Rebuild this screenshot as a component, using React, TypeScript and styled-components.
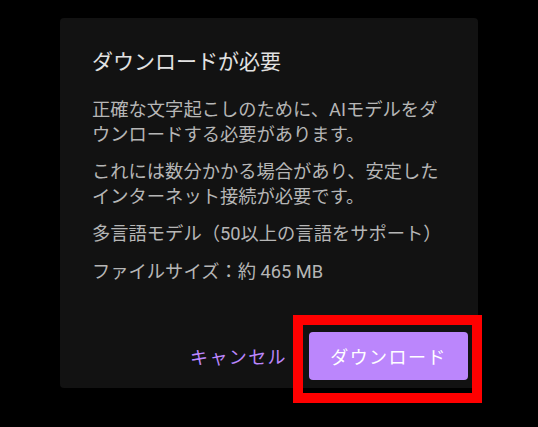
import styled, { createGlobalStyle } from 'styled-components';

const GlobalStyle = createGlobalStyle`
  html, body {
    margin: 0;
    padding: 0;
    background: #000;
  }
  body {
    font-family: Roboto, "Noto Sans CJK JP", sans-serif;
  }
`;

const Page = styled.div`
  display: flex;
  justify-content: center;
  align-items: flex-start;
  width: 538px;
  height: 427px;
  padding-top: 18px;
  box-sizing: border-box;
  overflow: hidden;
`;

const Dialog = styled.div`
  display: flex;
  flex-direction: column;
  width: 418px;
  background: #121212;
  border-radius: 4px;
`;

const Content = styled.div`
  padding: 30px 32px 40px 32px;
`;

const Title = styled.h2`
  margin: 0 0 22px;
  font-size: 21px;
  line-height: 28px;
  font-weight: 400;
  color: #e2e2e2;
`;

const Text = styled.p`
  margin: 0 0 13px;
  font-size: 18.3px;
  line-height: 24.5px;
  color: #b6b6b6;

  &:last-child {
    margin-bottom: 0;
  }
`;

const Actions = styled.div`
  display: flex;
  justify-content: flex-end;
  align-items: center;
  gap: 8px;
  padding: 8px 10px 8px 8px;
`;

const TextButton = styled.button`
  height: 48px;
  padding: 0 14px;
  border: none;
  background: transparent;
  font-family: inherit;
  font-size: 18px;
  letter-spacing: 1.4px;
  color: #bb86fc;
  cursor: pointer;
`;

const Highlight = styled.div`
  position: relative;

  &::after {
    content: '';
    position: absolute;
    top: -17px;
    left: -16px;
    right: -14px;
    bottom: -23px;
    border: 10px solid #ff0000;
    pointer-events: none;
  }
`;

const PrimaryButton = styled.button`
  display: block;
  height: 48px;
  width: 159px;
  padding: 0;
  border: none;
  border-radius: 4px;
  background: #bb86fc;
  font-family: inherit;
  font-size: 18px;
  letter-spacing: 1.4px;
  color: #fff;
  cursor: pointer;
`;

export default function App() {
  return (
    <>
      <GlobalStyle />
      <Page>
        <Dialog>
          <Content>
            <Title>ダウンロードが必要</Title>
            <Text>正確な文字起こしのために、AIモデルをダウンロードする必要があります。</Text>
            <Text>これには数分かかる場合があり、安定したインターネット接続が必要です。</Text>
            <Text>多言語モデル（50以上の言語をサポート）</Text>
            <Text>ファイルサイズ：約 465 MB</Text>
          </Content>
          <Actions>
            <TextButton>キャンセル</TextButton>
            <Highlight>
              <PrimaryButton>ダウンロード</PrimaryButton>
            </Highlight>
          </Actions>
        </Dialog>
      </Page>
    </>
  );
}
